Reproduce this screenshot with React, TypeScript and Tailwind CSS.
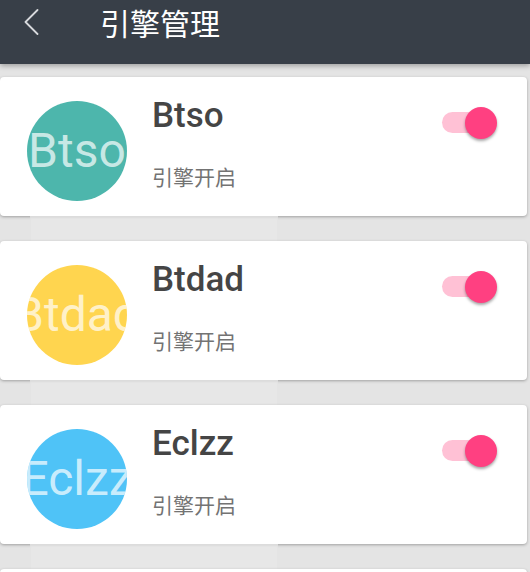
import React from "react";

type Engine = { name: string; color: string };

const engines: Engine[] = [
  { name: "Btso", color: "bg-[#4db6ac]" },
  { name: "Btdad", color: "bg-[#ffd54f]" },
  { name: "Eclzz", color: "bg-[#4fc3f7]" },
];

function Toggle() {
  return (
    <div className="relative mt-[30px] mr-[30px] h-[32px] w-[55px] shrink-0">
      <div className="absolute left-0 top-[5px] h-[21px] w-[50px] rounded-full bg-[#ffc1d5]" />
      <div className="absolute right-0 top-0 h-[32px] w-[32px] rounded-full bg-[#ff4081] shadow-[0_2px_3px_rgba(0,0,0,0.35)]" />
    </div>
  );
}

function Card({ e }: { e: Engine }) {
  return (
    <div className="mr-[3px] flex h-[139px] items-start rounded-[4px] bg-white shadow-[0_1px_3px_rgba(0,0,0,0.3)]">
      <div
        className={`ml-[27px] mt-[24px] flex h-[100px] w-[100px] shrink-0 items-center justify-center overflow-hidden rounded-full ${e.color}`}
      >
        <span className="whitespace-nowrap text-[48px] leading-none text-white/70 [font-family:Roboto,'Noto_Sans',sans-serif]">
          {e.name}
        </span>
      </div>
      <div className="ml-[25px] mt-[21px] flex flex-col">
        <div className="text-[35px] font-medium leading-none text-[#454545] [font-family:Roboto,'Noto_Sans',sans-serif]">
          {e.name}
        </div>
        <div className="mt-[33px] text-[21px] leading-[21px] text-[#737373] [font-family:'Noto_Sans_CJK_SC',sans-serif]">
          引擎开启
        </div>
      </div>
      <div className="ml-auto">
        <Toggle />
      </div>
    </div>
  );
}

export default function App() {
  return (
    <div className="h-[572px] w-[530px] overflow-hidden bg-[#e4e4e4]">
      <div className="relative h-16 bg-[#383f48] shadow-[0_2px_5px_rgba(0,0,0,0.3)]">
        <div className="flex h-[44px] items-center">
          <svg
            className="ml-[24px]"
            width="15"
            height="26"
            viewBox="0 0 15 26"
            fill="none"
          >
            <polyline
              points="13.5,1 1.5,13 13.5,25"
              stroke="#d8dadd"
              strokeWidth="1.8"
              strokeLinecap="round"
              strokeLinejoin="round"
            />
          </svg>
          <div className="ml-[61px] text-[30px] leading-none text-white [font-family:'Noto_Sans_CJK_SC',sans-serif]">
            引擎管理
          </div>
        </div>
      </div>
      <div className="flex flex-col pt-[13px]">
        {engines.map((e) => (
          <React.Fragment key={e.name}>
            <Card e={e} />
            <div className="h-[25px]">
              <div className="ml-[30px] h-[25px] w-[248px] bg-[#e7e7e7] shadow-[inset_0_2px_2px_rgba(0,0,0,0.05)]" />
            </div>
          </React.Fragment>
        ))}
        <div className="mr-[3px] h-[139px] rounded-[4px] bg-white shadow-[0_1px_3px_rgba(0,0,0,0.3)]" />
      </div>
    </div>
  );
}
